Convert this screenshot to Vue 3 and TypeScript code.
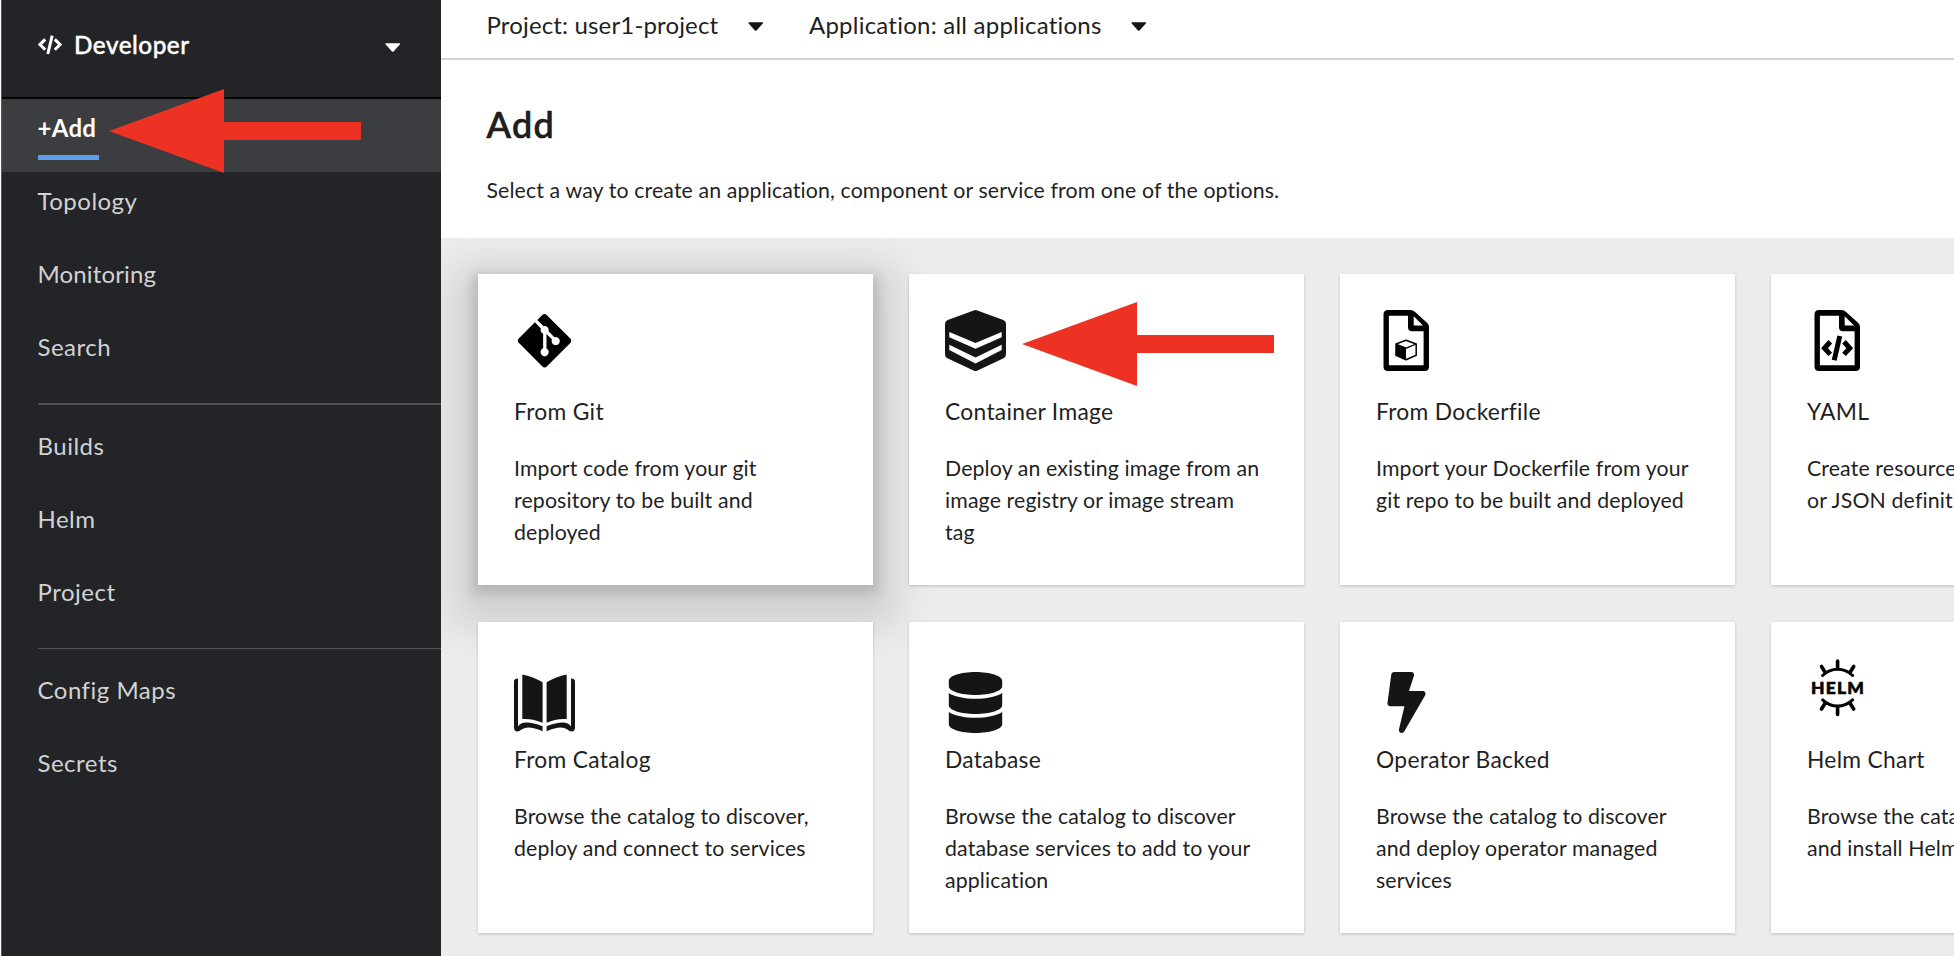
<script setup lang="ts">
type IconName = 'git' | 'image' | 'dockerfile' | 'yaml' | 'catalog' | 'database' | 'bolt' | 'helm'

interface Card {
  title: string
  icon: IconName
  lines: string[]
  low?: boolean
  raised?: boolean
}

interface NavItem {
  label: string
  active?: boolean
  tight?: boolean
}

const navGroups: NavItem[][] = [
  [{ label: '+Add', active: true }, { label: 'Topology' }, { label: 'Monitoring', tight: true }, { label: 'Search' }],
  [{ label: 'Builds' }, { label: 'Helm' }, { label: 'Project' }],
  [{ label: 'Config Maps' }, { label: 'Secrets' }],
]

const cards: Card[] = [
  { title: 'From Git', icon: 'git', raised: true, lines: ['Import code from your git', 'repository to be built and', 'deployed'] },
  { title: 'Container Image', icon: 'image', lines: ['Deploy an existing image from an', 'image registry or image stream', 'tag'] },
  { title: 'From Dockerfile', icon: 'dockerfile', lines: ['Import your Dockerfile from your', 'git repo to be built and deployed'] },
  { title: 'YAML', icon: 'yaml', lines: ['Create resources from their YAML', 'or JSON definitions'] },
  { title: 'From Catalog', icon: 'catalog', low: true, lines: ['Browse the catalog to discover,', 'deploy and connect to services'] },
  { title: 'Database', icon: 'database', low: true, lines: ['Browse the catalog to discover', 'database services to add to your', 'application'] },
  { title: 'Operator Backed', icon: 'bolt', low: true, lines: ['Browse the catalog to discover', 'and deploy operator managed', 'services'] },
  { title: 'Helm Chart', icon: 'helm', lines: ['Browse the catalog to discover', 'and install Helm Charts'] },
]
</script>

<template>
  <div class="app">
    <aside class="sidebar">
      <div class="perspective">
        <svg class="code-icon" viewBox="0 0 24 20" fill="none" stroke="#fff" stroke-width="3">
          <path d="M7.2 4.4 1.9 9.6l5.3 5.2M16.8 4.4l5.3 5.2-5.3 5.2M14.2.6 9.8 19" />
        </svg>
        <span class="perspective-name">Developer</span>
        <svg class="caret" viewBox="0 0 16 9"><path d="M1.2 0h13.6q1.4.2.5 1.4L8.8 8.5q-.8.7-1.6 0L.7 1.4Q-.2.2 1.2 0z" fill="#fff" /></svg>
      </div>
      <nav>
        <ul v-for="(group, g) in navGroups" :key="g" class="nav-group">
          <li v-for="item in group" :key="item.label" class="nav-item" :class="{ active: item.active, tight: item.tight }">
            <a class="nav-link">{{ item.label }}</a>
          </li>
        </ul>
      </nav>
    </aside>

    <main class="main">
      <div class="context-bar">
        <button class="selector project">
          <span>Project: user1-project</span>
          <svg class="caret" viewBox="0 0 16 9"><path d="M1.2 0h13.6q1.4.2.5 1.4L8.8 8.5q-.8.7-1.6 0L.7 1.4Q-.2.2 1.2 0z" fill="#151515" /></svg>
        </button>
        <button class="selector application">
          <span>Application: all applications</span>
          <svg class="caret" viewBox="0 0 16 9"><path d="M1.2 0h13.6q1.4.2.5 1.4L8.8 8.5q-.8.7-1.6 0L.7 1.4Q-.2.2 1.2 0z" fill="#151515" /></svg>
        </button>
      </div>
      <header class="page-header">
        <h1>Add</h1>
        <p>Select a way to create an application, component or service from one of the options.</p>
      </header>
      <section class="gallery">
        <article v-for="card in cards" :key="card.title" class="card" :class="{ raised: card.raised }">
          <div class="icon-slot" :class="{ low: card.low }">
            <svg v-if="card.icon === 'git'" class="icon" viewBox="0 0 61 61">
              <g transform="translate(4 .4) scale(.1185)">
                <path d="M439.55 236.05L244 40.45a28.87 28.87 0 0 0-40.81 0l-40.66 40.63 51.52 51.52c27.06-9.14 52.68 16.77 43.39 43.68l49.66 49.66c34.23-11.8 61.18 31 35.47 56.69-26.49 26.49-70.21-2.87-56-37.34L240.22 199v121.85c25.3 12.54 22.26 41.85 9.08 55a34.34 34.34 0 0 1-48.55 0c-17.57-17.6-11.07-46.91 11.25-56v-123c-20.8-8.51-24.6-30.74-18.64-45L142.57 101 8.45 235.14a28.86 28.86 0 0 0 0 40.81l195.61 195.6a28.86 28.86 0 0 0 40.8 0l194.69-194.69a28.86 28.86 0 0 0 0-40.81z" />
              </g>
            </svg>
            <svg v-else-if="card.icon === 'image'" class="icon" viewBox="0 0 61 61">
              <path fill="#151515" d="M28.7.4q1.8-.7 3.6 0l26 9.5Q61 11 61 13.8v30.4q0 2.6-2.4 4L32.500 60.4q-2 1-4 0L2.4 48.2Q0 46.8 0 44.2V13.8Q0 11 2.7 9.9z" />
              <path fill="#fff" d="M4.300 22 30.500 33 56.700 22V27.300L30.500 38.800 4.300 27.300zM4.300 34.700 30.500 47.500 56.700 34.700V40L30.500 53.500 4.300 40z" />
            </svg>
            <svg v-else-if="card.icon === 'dockerfile' || card.icon === 'yaml'" class="icon" viewBox="0 0 61 61">
              <path fill-rule="evenodd" d="M12 0H34.500Q37 0 38.800 1.800L51.300 13Q53 14.700 53 17V56.500Q53 61 48.500 61H12Q7.500 61 7.500 56.500V4.500Q7.500 0 12 0zM12.900 5.700V55.300H47.600V21.200H36Q32 21.200 32 17.200V5.700zM37.700 6.200V15.500H47z" />
              <template v-if="card.icon === 'dockerfile'">
                <path fill="#fff" stroke="#000" stroke-width="1.5" stroke-linejoin="round" d="M30 30.200 40.200 34V45.200L30 49.800 20 45.200V34z" />
                <path d="M20 34 30 38.200V49.800L20 45.200z" />
                <path fill="none" stroke="#000" stroke-width="1.3" d="M20 34 30 38.200 40.200 34" />
              </template>
              <path v-else fill="none" stroke="#000" stroke-width="5" d="M23.300 31.800 17.500 38.200l5.800 6.200M37 31.800 42.800 38.200l-5.800 6.200M32.800 26 27.200 50.200" />
            </svg>
            <svg v-else-if="card.icon === 'catalog'" class="icon" viewBox="0 0 61 61">
              <g fill="#151515">
                <path d="M8.300 2.500Q19 4.700 28.600 10.300V50.700Q19 46.300 8.300 47z" />
                <path d="M0 9.500Q0 6.700 4 6.500V54.500Q8.500 46.500 28.600 54.200V59.200Q14 53 8 57.300 5.500 59.800 2.800 59.400 0 58.800 0 56z" />
                <path d="M52.700 2.500Q42 4.700 32.600 10.300V50.700Q42 46.300 52.700 47z" />
                <path d="M61 9.500Q61 6.700 57 6.500V54.500Q52.500 46.500 32.600 54.200V59.200Q47 53 53 57.300 55.500 59.800 58.200 59.400 61 58.800 61 56z" />
              </g>
            </svg>
            <svg v-else-if="card.icon === 'database'" class="icon" viewBox="-32 0 512 512">
              <path fill="#151515" d="M448 73.143v45.714C448 159.143 347.667 192 224 192S0 159.143 0 118.857V73.143C0 32.857 100.333 0 224 0s224 32.857 224 73.143zM448 176v102.857C448 319.143 347.667 352 224 352S0 319.143 0 278.857V176c48.125 33.143 136.208 48.572 224 48.572S399.874 209.143 448 176zm0 160v102.857C448 479.143 347.667 512 224 512S0 479.143 0 438.857V336c48.125 33.143 136.208 48.572 224 48.572S399.874 369.143 448 336z" />
            </svg>
            <svg v-else-if="card.icon === 'bolt'" class="icon" viewBox="-96 0 512 512">
              <path fill="#151515" d="M296 160H180.600l42.600-129.800C227.200 15 215.700 0 200 0H56C44 0 33.800 8.900 32.200 20.800l-32 240C-1.700 275.200 9.500 288 24 288h118.700L96.600 482.500c-3.600 15.200 8 29.500 23.300 29.500 8.400 0 16.400-4.400 20.800-12l176-304c9.300-15.900-2.200-36-20.700-36z" />
            </svg>
            <svg v-else class="icon" viewBox="0 0 61 61">
              <g fill="none" stroke="#000" stroke-width="3" stroke-linecap="round">
                <path d="M15.600 17.500Q22 11.300 30.600 11.300T45.600 17.500M15.600 41.800Q22 48 30.600 48T45.600 41.800" />
                <path stroke-width="3.600" d="M30.600 3V10.500M30.600 49V56.500M14.500 8.500 18.300 14.500M46.700 8.500 42.900 14.500M14.500 51 18.300 45M46.700 51 42.900 45" />
              </g>
              <text x="4" y="35.900" textLength="53" class="helm-text">HELM</text>
            </svg>
          </div>
          <h2>{{ card.title }}</h2>
          <p><span v-for="line in card.lines" :key="line" class="line">{{ line }}</span></p>
        </article>
      </section>
    </main>

    <svg class="arrow arrow-nav" viewBox="0 0 252 84"><path d="M0 42 115 0V33H252V51H115V84z" /></svg>
    <svg class="arrow arrow-card" viewBox="0 0 252 84"><path d="M0 42 115 0V33H252V51H115V84z" /></svg>
  </div>
</template>

<style>
body {
  margin: 0;
  overflow: hidden;
}
</style>

<style scoped>
* {
  box-sizing: border-box;
}
.app {
  position: relative;
  display: flex;
  width: 100vw;
  height: 100vh;
  overflow: hidden;
  background: #fff;
  color: #1f1f1f;
  font-family: Lato, "Open Sans", sans-serif;
}
.sidebar {
  position: relative;
  z-index: 1;
  flex: 0 0 440px;
  margin-left: 1px;
  border-left: 1px solid #55595d;
  background: #232428;
}
.perspective {
  display: flex;
  align-items: center;
  height: 99px;
  padding: 0 40.5px 8px 36px;
  border-bottom: 2px solid #030303;
  color: #fff;
}
.code-icon {
  width: 24px;
  height: 20px;
}
.perspective-name {
  flex: 1;
  margin: 1px 0 0 12px;
  font-size: 24.3px;
  font-weight: 500;
  letter-spacing: 0.5px;
  line-height: 30px;
  -webkit-text-stroke: 0.4px #fff;
}
.caret {
  width: 15.5px;
  height: 9px;
}
.perspective .caret {
  margin-top: 5px;
}
.nav-group {
  margin: 0;
  padding: 0;
  list-style: none;
}
.nav-group + .nav-group::before {
  content: "";
  display: block;
  height: 1.5px;
  margin: 12px 0 12px 35.5px;
  background: #4f5255;
}
.nav-item {
  height: 73px;
  padding-left: 35.5px;
}
.nav-item.active {
  background: #3c3d40;
}
.nav-link {
  display: inline-block;
  height: 61px;
  color: #d2d2d2;
  font-size: 24px;
  letter-spacing: 0.5px;
  line-height: 57.4px;
}
.nav-item.tight .nav-link {
  letter-spacing: 0.15px;
}
.nav-item.active .nav-link {
  width: 61px;
  border-bottom: 5px solid #5e9cec;
  color: #fff;
  font-weight: 700;
  letter-spacing: 0.3px;
  line-height: 58.6px;
}
.main {
  flex: 1;
  min-width: 0;
}
.context-bar {
  display: flex;
  height: 60px;
  padding-left: 45.5px;
  border-bottom: 2px solid #d2d2d2;
}
.selector {
  display: flex;
  align-items: center;
  justify-content: space-between;
  height: 53px;
  padding: 0;
  border: 0;
  background: none;
  color: inherit;
  font-family: inherit;
  font-size: 24px;
  line-height: 30px;
  white-space: nowrap;
}
.selector span {
  margin-bottom: 3px;
}
.project {
  width: 277px;
  letter-spacing: 0.15px;
}
.application {
  width: 337px;
  margin-left: 45.5px;
  letter-spacing: 0.23px;
}
.page-header {
  height: 177.5px;
  padding: 41px 0 0 45.5px;
}
h1 {
  margin: 0;
  font-size: 36px;
  font-weight: 500;
  letter-spacing: 1.3px;
  line-height: 47px;
  -webkit-text-stroke: 0.7px #151515;
}
.page-header p {
  margin: 25.5px 0 0;
  font-size: 21.3px;
  letter-spacing: 0.12px;
  line-height: 32px;
}
.gallery {
  display: grid;
  grid-template-columns: repeat(4, 394.5px);
  grid-auto-rows: 311px;
  gap: 36.5px;
  height: 718.5px;
  padding: 36.5px 0 0 37px;
  background: #ececec;
}
.card {
  padding: 36px;
  background: #fff;
  box-shadow: 0 1.5px 3px rgba(3, 3, 3, 0.13), 0 0 3px rgba(3, 3, 3, 0.07);
}
.card.raised {
  box-shadow: 0 4.6px 10.6px 4.6px rgba(3, 3, 3, 0.13), 0 16.8px 36.5px 24.3px rgba(3, 3, 3, 0.12);
}
.icon-slot {
  display: flex;
  align-items: flex-start;
  height: 75px;
}
.icon-slot.low {
  align-items: flex-end;
}
.icon {
  width: 61px;
  height: 61px;
}
.helm-text {
  fill: #000;
  stroke: #000;
  stroke-width: 0.6px;
  font-family: Lato, sans-serif;
  font-size: 17.5px;
  font-weight: 900;
}
h2 {
  margin: 9px 0 0;
  font-size: 22.8px;
  font-weight: 400;
  letter-spacing: 0.3px;
  line-height: 34px;
}
.card p {
  margin: 24px 0 0;
  font-size: 21.3px;
  letter-spacing: 0.13px;
  line-height: 32px;
}
.line {
  display: block;
  white-space: nowrap;
}
.arrow {
  position: absolute;
  z-index: 2;
  width: 252px;
  height: 84px;
  fill: #ed3223;
}
.arrow-nav {
  top: 89px;
  left: 109px;
}
.arrow-card {
  top: 302px;
  left: 1022px;
}
</style>
